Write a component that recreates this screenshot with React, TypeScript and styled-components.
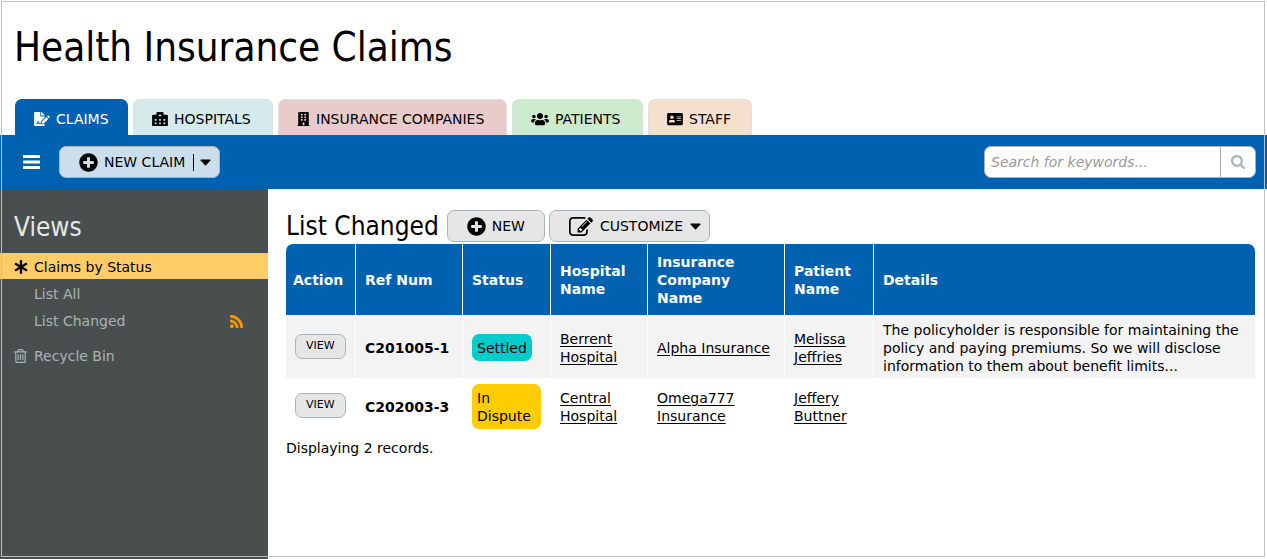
import React from "react";
import styled, { createGlobalStyle } from "styled-components";
import {
  FaFileSignature,
  FaHospitalAlt,
  FaBuilding,
  FaUsers,
  FaAddressCard,
  FaAsterisk,
  FaPlusCircle,
} from "react-icons/fa";

const blue = "#0061b1";

const GlobalStyle = createGlobalStyle`
  *, *::before, *::after { box-sizing: border-box; }
  body {
    margin: 0;
    background: #fff;
    color: #000;
    font: 14px/18px Verdana, "DejaVu Sans", sans-serif;
  }
  h1, h2, ul { margin: 0; padding: 0; font-weight: 400; }
  button, input { font: inherit; color: inherit; }
  svg { display: block; flex: none; }
`;

const Page = styled.div`
  position: relative;
  display: flex;
  flex-direction: column;
  min-height: 100vh;
`;

const Frame = styled.div`
  position: absolute;
  inset: 1px 2px 2px 1px;
  border: 1px solid #c0c0c0;
  pointer-events: none;
`;

const Header = styled.header`
  padding: 21px 14px 0;
`;

const Title = styled.h1`
  font-family: Tahoma, "DejaVu Sans Condensed", "DejaVu Sans", sans-serif;
  font-stretch: condensed;
  font-size: 40px;
  line-height: 52px;
`;

const Tabs = styled.nav`
  display: flex;
  gap: 5px;
  margin-top: 26px;
  padding-left: 1px;
`;

const Tab = styled.a<{ $bg: string; $width: number; $iconWidth: number; $active?: boolean }>`
  display: flex;
  align-items: center;
  gap: 6px;
  min-width: ${(p) => p.$width}px;
  height: 36px;
  padding: 3px 16px 0 18px;
  border: 1px solid ${(p) => (p.$active ? blue : "#dfdfdf")};
  border-bottom: 0;
  border-radius: 7px 7px 0 0;
  background: ${(p) => p.$bg};
  color: ${(p) => (p.$active ? "#fff" : "#000")};
  text-decoration: none;
  text-transform: uppercase;
  white-space: nowrap;
  svg { width: ${(p) => p.$iconWidth}px; height: 14px; }
`;

const Toolbar = styled.div`
  display: flex;
  align-items: center;
  height: 54px;
  padding: 0 11px 0 23px;
  background: ${blue};
`;

const MenuButton = styled.button`
  padding: 0;
  margin-right: 19px;
  border: 0;
  background: none;
  color: #fff;
`;

const Button = styled.button<{ $bg?: string }>`
  display: flex;
  align-items: center;
  gap: 6px;
  height: 32px;
  padding: 0 19px;
  border: 1px solid #a9b4b6;
  border-radius: 7px;
  background: ${(p) => p.$bg || "#e6e6e6"};
  text-transform: uppercase;
  white-space: nowrap;
`;

const MenuTrigger = styled(Button)<{ $gap?: number }>`
  gap: ${(p) => p.$gap || 6}px;
  padding-right: 8px;
`;

const Divider = styled.span`
  width: 1px;
  height: 17px;
  margin-left: 2px;
  background: #000;
`;

const Search = styled.form`
  display: flex;
  width: 272px;
  height: 32px;
  margin-left: auto;
  border: 1px solid #a9b4b6;
  border-radius: 7px;
  background: #fff;
  overflow: hidden;
`;

const SearchInput = styled.input`
  flex: 1;
  min-width: 0;
  padding: 0 6px;
  border: 0;
  outline: 0;
  background: none;
  &::placeholder { color: #999; font-style: italic; opacity: 1; }
`;

const SearchButton = styled.button`
  display: grid;
  place-items: center;
  width: 35px;
  padding: 0;
  border: 0;
  border-left: 1px solid #a9b4b6;
  background: none;
  color: #a9b4b6;
`;

const Body = styled.div`
  display: flex;
  flex: 1;
`;

const Sidebar = styled.aside`
  flex: none;
  width: 268px;
  padding-top: 22px;
  background: #494f4f;
  color: #a9b4b6;
`;

const Heading = styled.h2`
  font-family: Tahoma, "DejaVu Sans Condensed", "DejaVu Sans", sans-serif;
  font-stretch: condensed;
  font-size: 26px;
  line-height: 32px;
  white-space: nowrap;
`;

const SideHeading = styled(Heading)`
  padding: 0 14px;
  margin-bottom: 10px;
  color: #e6e6e6;
`;

const ViewList = styled.ul`
  display: flex;
  flex-direction: column;
  gap: 1px;
  margin-bottom: 9px;
  list-style: none;
`;

const ViewLink = styled.a<{ $active?: boolean }>`
  display: grid;
  grid-template-columns: 14px 1fr auto;
  gap: 6px;
  align-items: center;
  height: 26px;
  padding: 2px 25px 0 14px;
  background: ${(p) => (p.$active ? "#fc6" : "none")};
  color: ${(p) => (p.$active ? "#000" : "inherit")};
  text-decoration: none;
`;

const Main = styled.main`
  flex: 1;
  min-width: 0;
  padding: 21px 12px 0 18px;
`;

const TitleRow = styled.div`
  display: flex;
  align-items: center;
  gap: 4px;
  margin-bottom: 2px;
`;

const ListHeading = styled(Heading)`
  margin-right: 4px;
`;

const Table = styled.table`
  width: 100%;
  table-layout: fixed;
  border-collapse: separate;
  border-spacing: 0;
`;

const Col = styled.col<{ $width?: number }>`
  width: ${(p) => (p.$width ? `${p.$width}px` : "auto")};
`;

const Th = styled.th`
  height: 72px;
  padding: 2px 9px;
  border-right: 1px solid #fff;
  border-bottom: 1px solid #fff;
  background: ${blue};
  background-clip: padding-box;
  color: #fff;
  text-align: left;
  &:first-child { padding-left: 7px; border-top-left-radius: 7px; }
  &:last-child { border-right: 0; border-top-right-radius: 7px; }
`;

const Row = styled.tr<{ $shaded?: boolean }>`
  background: ${(p) => (p.$shaded ? "#f3f3f3" : "#fff")};
`;

const Td = styled.td<{ $strong?: boolean }>`
  padding: 5px 9px 3px;
  border-right: 1px solid #fff;
  font-weight: ${(p) => (p.$strong ? 700 : 400)};
  &:last-child { border-right: 0; }
`;

const ActionTd = styled(Td)`
  padding: 3px 9px 5px;
`;

const StatusTd = styled(Td)`
  padding: 6px 9px 5px;
`;

const Badge = styled.span<{ $bg: string }>`
  display: block;
  width: fit-content;
  padding: 5px 5px 4px;
  border-radius: 7px;
  background: ${(p) => p.$bg};
`;

const ViewButton = styled.button`
  display: block;
  height: 25px;
  padding: 0 10px;
  border: 1px solid #a9b4b6;
  border-radius: 7px;
  background: #e6e6e6;
  font-size: 11px;
  text-transform: uppercase;
`;

const RecordLink = styled.a`
  color: #000;
  text-underline-offset: 2px;
`;

const Summary = styled.p`
  margin: 5px 0;
`;

const BarsIcon = () => (
  <svg width="17" height="14" viewBox="0 0 17 14" fill="currentColor" aria-hidden="true">
    <rect width="17" height="3" rx=".5" />
    <rect y="5.5" width="17" height="3" rx=".5" />
    <rect y="11" width="17" height="3" rx=".5" />
  </svg>
);

const CaretIcon = () => (
  <svg width="11" height="7" viewBox="0 0 11 7" fill="currentColor" aria-hidden="true">
    <path d="M1 .5h9q.9.3.4 1L6 6.2q-.5.5-1 0L.6 1.5q-.5-.7.4-1z" />
  </svg>
);

const SearchIcon = () => (
  <svg width="14" height="14" viewBox="64 128 1664 1664" fill="currentColor" aria-hidden="true">
    <path d="M1216 832q0-185-131.5-316.5t-316.5-131.5-316.5 131.5-131.5 316.5 131.5 316.5 316.5 131.5 316.5-131.5 131.5-316.5zm512 832q0 52-38 90t-90 38q-54 0-90-38l-343-342q-179 124-399 124-143 0-273.5-55.5t-225-150-150-225-55.5-273.5 55.5-273.5 150-225 225-150 273.5-55.5 273.5 55.5 225 150 150 225 55.5 273.5q0 220-124 399l343 343q37 37 37 90z" />
  </svg>
);

const FeedIcon = () => (
  <svg width="13" height="13" viewBox="192 128 1408 1408" fill="#ff9900" stroke="#ff9900" strokeWidth="50" aria-hidden="true">
    <path d="M576 1344q0 80-56 136t-136 56-136-56-56-136 56-136 136-56 136 56 56 136zm512 123q2 28-17 48-18 21-47 21h-135q-25 0-43-16.5t-20-41.5q-22-229-184.5-391.5t-391.5-184.5q-25-2-41.5-20t-16.5-43v-135q0-29 21-47 17-17 43-17h5q160 13 306 80.5t259 181.5q114 113 181.5 259t80.5 306zm512 2q2 27-18 47-18 20-46 20h-143q-26 0-44.5-17.5t-19.5-42.5q-12-215-101-408.5t-231.5-336-336-231.5-408.5-102q-25-1-42.5-19.5t-17.5-43.5v-143q0-28 20-46 18-18 44-18h3q262 13 501.5 120t425.5 294q187 186 294 425.5t120 501.5z" />
  </svg>
);

const TrashIcon = () => (
  <svg width="13" height="14" viewBox="192 128 1408 1536" fill="currentColor" aria-hidden="true">
    <path d="M704 736v576q0 14-9 23t-23 9h-64q-14 0-23-9t-9-23v-576q0-14 9-23t23-9h64q14 0 23 9t9 23zm256 0v576q0 14-9 23t-23 9h-64q-14 0-23-9t-9-23v-576q0-14 9-23t23-9h64q14 0 23 9t9 23zm256 0v576q0 14-9 23t-23 9h-64q-14 0-23-9t-9-23v-576q0-14 9-23t23-9h64q14 0 23 9t9 23zm128 724v-948h-896v948q0 22 7 40.5t14.5 27 10.5 8.5h832q3 0 10.5-8.5t14.5-27 7-40.5zm-672-1076h448l-48-117q-7-9-17-11h-317q-10 2-17 11zm928 32v64q0 14-9 23t-23 9h-96v948q0 83-47 143.5t-113 60.5h-832q-66 0-113-58.5t-47-141.5v-952h-96q-14 0-23-9t-9-23v-64q0-14 9-23t23-9h309l70-167q15-37 54-63t79-26h320q40 0 79 26t54 63l70 167h309q14 0 23 9t9 23z" />
  </svg>
);

const EditIcon = () => (
  <svg width="24" height="19" viewBox="0 128 1792 1408" fill="currentColor" aria-hidden="true">
    <path d="M888 1184l116-116-152-152-116 116v56h96v96h56zm440-720q-16-16-33 1l-350 350q-17 17-1 33t33-1l350-350q17-17 1-33zm80 594v190q0 119-84.5 203.5t-203.5 84.5h-832q-119 0-203.5-84.5t-84.5-203.5v-832q0-119 84.5-203.5t203.5-84.5h832q63 0 117 25 15 7 18 23 3 17-9 29l-49 49q-14 14-32 8-23-6-45-6h-832q-66 0-113 47t-47 113v832q0 66 47 113t113 47h832q66 0 113-47t47-113v-126q0-13 9-22l64-64q15-15 35-7t20 29zm-96-738l288 288-672 672h-288v-288zm444 132l-92 92-288-288 92-92q28-28 68-28t68 28l152 152q28 28 28 68t-28 68z" />
  </svg>
);

const tabs = [
  { label: "Claims", bg: blue, width: 113, icon: FaFileSignature, iconWidth: 16, active: true },
  { label: "Hospitals", bg: "#d5eaea", width: 140, icon: FaHospitalAlt, iconWidth: 16 },
  { label: "Insurance Companies", bg: "#eacbcc", width: 229, icon: FaBuilding, iconWidth: 13 },
  { label: "Patients", bg: "#cceacc", width: 131, icon: FaUsers, iconWidth: 18 },
  { label: "Staff", bg: "#f4e0cc", width: 104, icon: FaAddressCard, iconWidth: 16 },
];

const columns = [
  { name: "Action", width: 70 },
  { name: "Ref Num", width: 107 },
  { name: "Status", width: 88 },
  { name: "Hospital Name", width: 97 },
  { name: "Insurance Company Name", width: 137 },
  { name: "Patient Name", width: 89 },
  { name: "Details" },
];

const claims = [
  {
    ref: "C201005-1",
    status: "Settled",
    color: "#00cccc",
    hospital: "Berrent Hospital",
    insurer: "Alpha Insurance",
    patient: "Melissa Jeffries",
    details:
      "The policyholder is responsible for maintaining the policy and paying premiums. So we will disclose information to them about benefit limits...",
  },
  {
    ref: "C202003-3",
    status: "In Dispute",
    color: "#ffcc00",
    hospital: "Central Hospital",
    insurer: "Omega777 Insurance",
    patient: "Jeffery Buttner",
    details: "",
  },
];

export default function App() {
  return (
    <Page>
      <GlobalStyle />
      <Header>
        <Title>Health Insurance Claims</Title>
        <Tabs>
          {tabs.map(({ label, bg, width, icon: Icon, iconWidth, active }) => (
            <Tab key={label} href="#" $bg={bg} $width={width} $iconWidth={iconWidth} $active={active}>
              <Icon />
              {label}
            </Tab>
          ))}
        </Tabs>
      </Header>
      <Toolbar>
        <MenuButton aria-label="Menu">
          <BarsIcon />
        </MenuButton>
        <MenuTrigger $bg="#ccdeee">
          <FaPlusCircle size={19} />
          New Claim
          <Divider />
          <CaretIcon />
        </MenuTrigger>
        <Search>
          <SearchInput type="text" aria-label="Search" placeholder="Search for keywords..." />
          <SearchButton type="button" aria-label="Search">
            <SearchIcon />
          </SearchButton>
        </Search>
      </Toolbar>
      <Body>
        <Sidebar>
          <SideHeading>Views</SideHeading>
          <ViewList>
            <li>
              <ViewLink href="#" $active>
                <FaAsterisk size={14} />
                Claims by Status
              </ViewLink>
            </li>
            <li>
              <ViewLink href="#">
                <span />
                List All
              </ViewLink>
            </li>
            <li>
              <ViewLink href="#">
                <span />
                List Changed
                <FeedIcon />
              </ViewLink>
            </li>
          </ViewList>
          <ViewLink href="#">
            <TrashIcon />
            Recycle Bin
          </ViewLink>
        </Sidebar>
        <Main>
          <TitleRow>
            <ListHeading>List Changed</ListHeading>
            <Button>
              <FaPlusCircle size={19} />
              New
            </Button>
            <MenuTrigger $gap={7}>
              <EditIcon />
              Customize
              <CaretIcon />
            </MenuTrigger>
          </TitleRow>
          <Table>
            <colgroup>
              {columns.map((c) => (
                <Col key={c.name} $width={c.width} />
              ))}
            </colgroup>
            <thead>
              <tr>
                {columns.map((c) => (
                  <Th key={c.name} scope="col">
                    {c.name}
                  </Th>
                ))}
              </tr>
            </thead>
            <tbody>
              {claims.map((c, i) => (
                <Row key={c.ref} $shaded={i % 2 === 0}>
                  <ActionTd>
                    <ViewButton>View</ViewButton>
                  </ActionTd>
                  <Td $strong>{c.ref}</Td>
                  <StatusTd>
                    <Badge $bg={c.color}>{c.status}</Badge>
                  </StatusTd>
                  <Td>
                    <RecordLink href="#">{c.hospital}</RecordLink>
                  </Td>
                  <Td>
                    <RecordLink href="#">{c.insurer}</RecordLink>
                  </Td>
                  <Td>
                    <RecordLink href="#">{c.patient}</RecordLink>
                  </Td>
                  <Td>{c.details}</Td>
                </Row>
              ))}
            </tbody>
          </Table>
          <Summary>Displaying 2 records.</Summary>
        </Main>
      </Body>
      <Frame />
    </Page>
  );
}
